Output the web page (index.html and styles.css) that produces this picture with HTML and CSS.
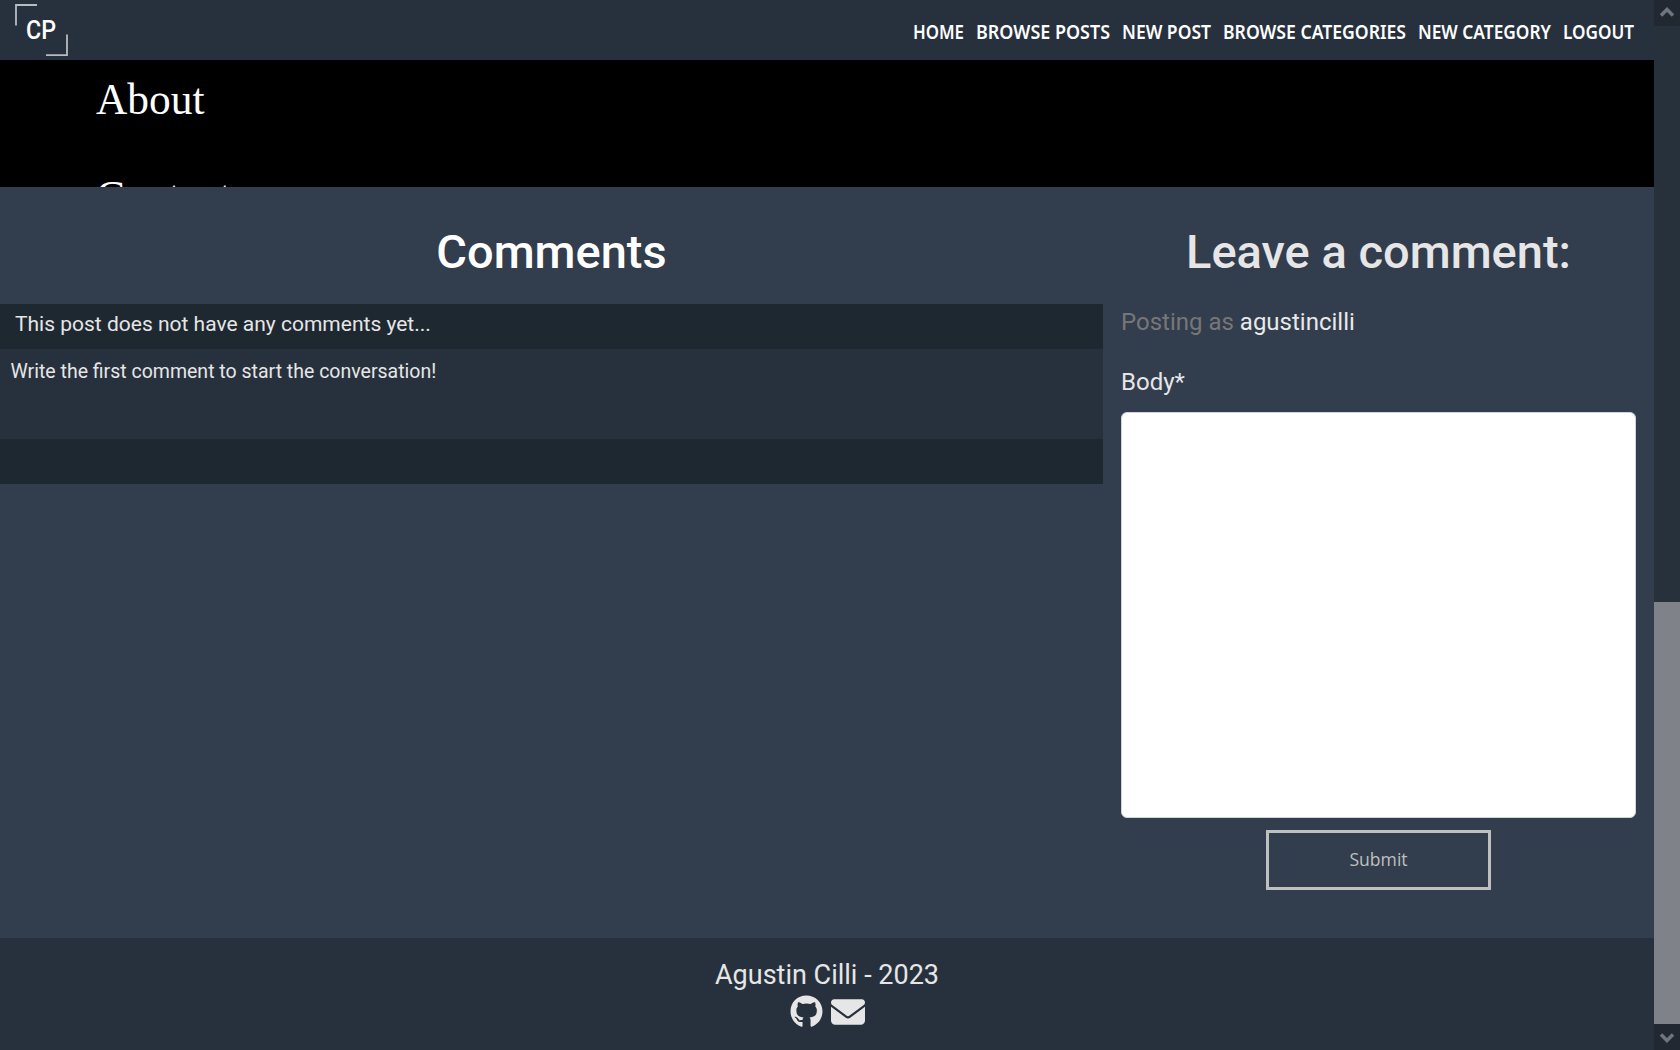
FILE: index.html
```html
<!DOCTYPE html>
<html lang="en">
<head>
<meta charset="utf-8">
<title>CP - Post</title>
<link rel="stylesheet" href="styles.css">
</head>
<body>
<div class="page">
  <header class="header">
    <a class="logo"><svg width="54" height="53" viewBox="0 0 54 53">
      <path d="M1 21.500V1H22" fill="none" stroke="#b8bcc0" stroke-width="1.8"/>
      <path d="M31 51.200H52V30.500" fill="none" stroke="#b8bcc0" stroke-width="1.8"/>
      <text class="logo-text" x="11" y="35" textLength="30" lengthAdjust="spacingAndGlyphs">CP</text>
    </svg></a>
    <nav class="nav">
      <a><svg width="51" height="28"><text x="0" y="21" textLength="51" lengthAdjust="spacingAndGlyphs">HOME</text></svg></a>
      <a><svg width="134" height="28"><text x="0" y="21" textLength="134" lengthAdjust="spacingAndGlyphs">BROWSE POSTS</text></svg></a>
      <a><svg width="89" height="28"><text x="0" y="21" textLength="89" lengthAdjust="spacingAndGlyphs">NEW POST</text></svg></a>
      <a><svg width="183" height="28"><text x="0" y="21" textLength="183" lengthAdjust="spacingAndGlyphs">BROWSE CATEGORIES</text></svg></a>
      <a><svg width="133" height="28"><text x="0" y="21" textLength="133" lengthAdjust="spacingAndGlyphs">NEW CATEGORY</text></svg></a>
      <a><svg width="71" height="28"><text x="0" y="21" textLength="71" lengthAdjust="spacingAndGlyphs">LOGOUT</text></svg></a>
    </nav>
  </header>
  <section class="post">
    <p>About</p>
    <p>Contact</p>
  </section>
  <main class="main">
    <section class="comments">
      <h2>Comments</h2>
      <div class="comment-head">This post does not have any comments yet...</div>
      <div class="comment-body">Write the first comment to start the conversation!</div>
      <div class="comment-foot"></div>
    </section>
    <section class="leave">
      <h2>Leave a comment:</h2>
      <p class="posting">Posting as <span>agustincilli</span></p>
      <label for="body">Body*</label>
      <textarea id="body"></textarea>
      <button class="submit">Submit</button>
    </section>
  </main>
  <footer class="footer">
    <p>Agustin Cilli - 2023</p>
    <div class="social">
      <svg width="33" height="33" viewBox="0 0 496 512"><path fill="#e6e6e6" d="M165.900 397.400c0 2-2.300 3.600-5.200 3.600-3.300.3-5.600-1.300-5.600-3.600 0-2 2.300-3.600 5.200-3.600 3-.3 5.600 1.300 5.600 3.600zm-31.100-4.500c-.7 2 1.300 4.300 4.300 4.900 2.600 1 5.600 0 6.200-2s-1.300-4.300-4.300-5.200c-2.600-.7-5.500.3-6.200 2.300zM244.800 8C106.100 8 0 113.300 0 252c0 110.900 69.800 205.800 169.500 239.200 12.800 2.300 17.300-5.600 17.300-12.100 0-6.200-.3-40.400-.3-61.400 0 0-70 15-84.700-29.800 0 0-11.400-29.100-27.800-36.600 0 0-22.900-15.700 1.600-15.400 0 0 24.900 2 38.600 25.800 21.900 38.600 58.600 27.500 72.900 20.900 2.300-16 8.800-27.100 16-33.700-55.900-6.200-112.300-14.300-112.300-110.500 0-27.500 7.600-41.300 23.600-58.900-2.600-6.500-11.100-33.300 2.600-67.900 20.900-6.500 69 27 69 27 20-5.600 41.500-8.500 62.800-8.500s42.800 2.900 62.800 8.500c0 0 48.100-33.600 69-27 13.700 34.700 5.200 61.400 2.600 67.900 16 17.700 25.800 31.500 25.800 58.900 0 96.500-58.900 104.200-114.800 110.500 9.200 7.900 17 22.900 17 46.400 0 33.700-.3 75.400-.3 83.600 0 6.500 4.600 14.400 17.300 12.100C428.200 457.800 496 362.900 496 252 496 113.300 383.500 8 244.800 8z"/></svg>
      <svg width="34" height="34" viewBox="0 0 512 512"><path fill="#e6e6e6" d="M48 64C21.500 64 0 85.500 0 112c0 15.100 7.100 29.300 19.200 38.400L236.800 313.600c11.400 8.500 27 8.500 38.400 0L492.800 150.400c12.100-9.100 19.200-23.300 19.200-38.400c0-26.500-21.500-48-48-48H48zM0 176V384c0 35.300 28.700 64 64 64H448c35.300 0 64-28.700 64-64V176L294.400 339.200c-22.800 17.100-54 17.100-76.800 0L0 176z"/></svg>
    </div>
  </footer>
</div>
<aside class="scrollbar">
  <div class="arrow"><svg width="26" height="26"><path d="M7 15.500L13 9.500L19 15.500" fill="none" stroke="#71747c" stroke-width="3.500"/></svg></div>
  <div class="track"><div class="thumb"></div></div>
  <div class="arrow"><svg width="26" height="26"><path d="M7 10.500L13 16.500L19 10.500" fill="none" stroke="#71747c" stroke-width="3.500"/></svg></div>
</aside>
</body>
</html>
```
FILE: styles.css
```css
* { box-sizing: border-box; }
body { margin: 0; height: 1050px; display: flex; overflow: hidden; background: #323d4d; color: #e6e6e6; font-family: Roboto, sans-serif; }
h2, p { margin: 0; }
svg { display: block; }
.page { width: 1654px; height: 1050px; display: flex; flex-direction: column; }
.header { height: 60px; flex: none; background: #27313d; display: flex; justify-content: space-between; padding: 4px 20.5px 0 15px; }
.logo-text { font: 500 26px Roboto, sans-serif; fill: #fff; }
.nav { display: flex; gap: 12px; padding-top: 14px; }
.nav svg { overflow: visible; }
.nav text { font: 650 19.6px "Noto Sans", sans-serif; fill: #fff; }
.post { height: 127px; flex: none; overflow: hidden; background: #000; color: #fff; padding: 15px 96px 0; font: 43.4px/48px "Liberation Serif", serif; }
.post p { margin-bottom: 49px; }
.main { flex: 1; display: flex; }
.comments { width: 1103px; }
h2 { height: 117px; padding-top: 37px; line-height: 56px; font-size: 47px; font-weight: 500; text-align: center; }
.comments h2 { color: #fff; }
.comment-head { height: 45px; background: #1e2831; padding: 8px 15px; font-size: 21px; line-height: 24px; }
.comment-body { height: 90px; background: #27313d; padding: 11px 10.5px; font-size: 19.5px; line-height: 24px; }
.comment-foot { height: 45px; background: #1e2831; }
.leave { width: 551px; padding: 0 18px; display: flex; flex-direction: column; font-size: 24px; line-height: 28px; }
.posting { color: #777; margin-top: 4px; }
.posting span { color: #e9e9e9; }
.leave label { margin: 32px 0 16px; }
.leave textarea { width: 515px; height: 406px; display: block; resize: none; border: 1px solid #ced4da; border-radius: 6px; background: #fff; }
.submit { align-self: center; width: 225px; height: 60px; margin-top: 12px; padding: 0 0 2px; background: none; border: 3px solid #bfc0bd; color: #bfc0bd; font: 500 17.6px "Open Sans", sans-serif; }
.footer { height: 112px; flex: none; background: #27313d; padding-top: 20px; display: flex; flex-direction: column; align-items: center; font-size: 27px; line-height: 34px; }
.social { display: flex; gap: 8px; margin-top: 3px; }
.scrollbar { width: 26px; height: 1050px; background: #27313c; display: flex; flex-direction: column; }
.arrow { height: 26px; background: #222832; }
.track { flex: 1; display: flex; flex-direction: column; justify-content: flex-end; }
.thumb { height: 422px; background: #7f8289; }
```
